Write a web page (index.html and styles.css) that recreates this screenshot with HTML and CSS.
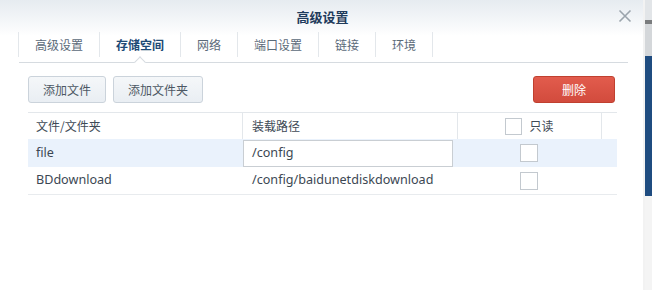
FILE: index.html
```html
<!DOCTYPE html>
<html lang="zh-CN">
<head>
<meta charset="utf-8">
<title>高级设置</title>
<link rel="stylesheet" href="styles.css">
</head>
<body>
<div class="dialog">
  <div class="titlebar">
    <span></span>
    <span class="title">高级设置</span>
    <span class="close">
      <svg width="14" height="14" viewBox="0 0 14 14"><path d="M1.5 1.5 L12.5 12.5 M12.5 1.5 L1.5 12.5" stroke="#9ba4ac" stroke-width="1.6" fill="none"/></svg>
    </span>
  </div>
  <div class="tabs">
    <div class="tab">高级设置</div>
    <div class="tab active">存储空间</div>
    <div class="tab">网络</div>
    <div class="tab">端口设置</div>
    <div class="tab">链接</div>
    <div class="tab last">环境</div>
  </div>
  <div class="tabline"></div>
  <div class="content">
    <div class="toolbar">
      <button class="btn">添加文件</button>
      <button class="btn">添加文件夹</button>
      <span class="spacer"></span>
      <button class="btn danger">删除</button>
    </div>
    <div class="table">
      <div class="row head">
        <div class="cell">文件/文件夹</div>
        <div class="cell sep">装载路径</div>
        <div class="cell sep center"><span class="check"></span><span class="ro">只读</span></div>
        <div class="cell sep"></div>
      </div>
      <div class="row body selected">
        <div class="cell latin">file</div>
        <div class="cell edit"><div class="input latin">/config</div></div>
        <div class="cell center"><span class="check big"></span></div>
        <div class="cell"></div>
      </div>
      <div class="row body">
        <div class="cell latin">BDdownload</div>
        <div class="cell path latin">/config/baidunetdiskdownload</div>
        <div class="cell center"><span class="check big"></span></div>
        <div class="cell"></div>
      </div>
    </div>
  </div>
</div>
<div class="backdrop"></div>
</body>
</html>
```
FILE: styles.css
```css
html, body {
  margin: 0;
  padding: 0;
}
body {
  display: flex;
  width: 652px;
  height: 290px;
  overflow: hidden;
  font-family: "Noto Sans CJK SC", "Noto Sans", sans-serif;
  font-size: 12px;
  color: #3e4a56;
  background: #ffffff;
}
.dialog {
  width: 643px;
  height: 290px;
  flex: none;
  background: linear-gradient(to bottom, #e6ebf0 0px, #f6f8fa 24px, #ffffff 36px);
  box-shadow: 1px 0 2px rgba(0,0,0,0.15);
}
.backdrop {
  flex: 1;
  background: linear-gradient(to bottom, #e2e5e8 0 20px, #7a7c7e 20px 24px, #d4d7da 24px 56px, #1f4c80 56px 196px, #f4f4f4 196px);
  border-left: 2px solid #f2f2f2;
}
.titlebar {
  height: 32px;
  display: grid;
  grid-template-columns: 1fr auto 1fr;
  align-items: center;
}
.title {
  font-size: 13px;
  font-weight: 700;
  color: #1f3b5b;
  padding-left: 2px;
}
.close {
  justify-self: end;
  padding-right: 11px;
  display: flex;
  height: 14px;
}
.tabs {
  display: flex;
  height: 25px;
  margin-left: 18px;
}
.tab {
  display: flex;
  align-items: center;
  padding: 0 16px;
  border-left: 1px solid #e3e7eb;
  color: #5b6a79;
  position: relative;
  line-height: 1;
}
.tab.last {
  border-right: 1px solid #e3e7eb;
}
.tab.active {
  color: #1d4a75;
  font-weight: 700;
}
.tab.active::after {
  content: "";
  position: absolute;
  left: 50%;
  bottom: -9px;
  width: 7px;
  height: 7px;
  margin-left: -4px;
  background: #ffffff;
  border-left: 1px solid #d6dbe0;
  border-top: 1px solid #d6dbe0;
  transform: rotate(45deg);
  z-index: 2;
}
.tabline {
  margin: 5px 15px 0 19px;
  height: 0;
  border-top: 1px solid #d6dbe0;
}
.content {
  padding: 13px 26px 0 28px;
}
.toolbar {
  display: flex;
  gap: 7px;
  height: 27px;
}
.spacer {
  flex: 1;
}
.btn {
  font-family: "Noto Sans CJK SC", sans-serif;
  font-size: 12px;
  height: 27px;
  padding: 0 14px;
  border: 1px solid #cbd3db;
  border-radius: 3px;
  background: linear-gradient(to bottom, #f5f7f9, #e9eef3);
  color: #4d5864;
  line-height: 1;
}
.btn.danger {
  width: 82px;
  margin-right: 2px;
  background: linear-gradient(to bottom, #e25c4d, #d24b3d);
  border-color: #c0402f;
  color: #ffffff;
}
.table {
  margin-top: 9px;
  border-top: 1px solid #e3e7eb;
}
.row {
  display: grid;
  grid-template-columns: 214px 215px 144px 1fr;
  height: 27px;
}
.row.head {
  height: 26px;
}
.row.body {
  height: 27px;
  border-bottom: 1px solid #e8ebee;
}
.row.selected {
  background: #eaf2fc;
  border-bottom-color: #eaf2fc;
}
.cell {
  display: flex;
  align-items: center;
  padding-left: 8px;
  line-height: 1;
}
.cell.sep {
  border-left: 1px solid #e3e7eb;
  padding-left: 9px;
}
.cell.sep.center, .cell.center {
  justify-content: center;
  padding-left: 0;
}
.cell.edit {
  padding: 1px 4px 0 1px;
  align-items: stretch;
}
.cell.path {
  padding-left: 10px;
}
.latin {
  font-family: "Noto Sans", "Noto Sans CJK SC", sans-serif;
  font-size: 12.6px;
  color: #3c4753;
}
.input {
  flex: 1;
  display: flex;
  align-items: center;
  border: 1px solid #c9ced3;
  background: #ffffff;
  padding-left: 8px;
  height: 25px;
}
.check {
  display: inline-block;
  width: 15px;
  height: 15px;
  border: 1px solid #c3c9cf;
  background: #ffffff;
}
.check.big {
  width: 16px;
  height: 16px;
}
.ro {
  margin-left: 7px;
}
```
